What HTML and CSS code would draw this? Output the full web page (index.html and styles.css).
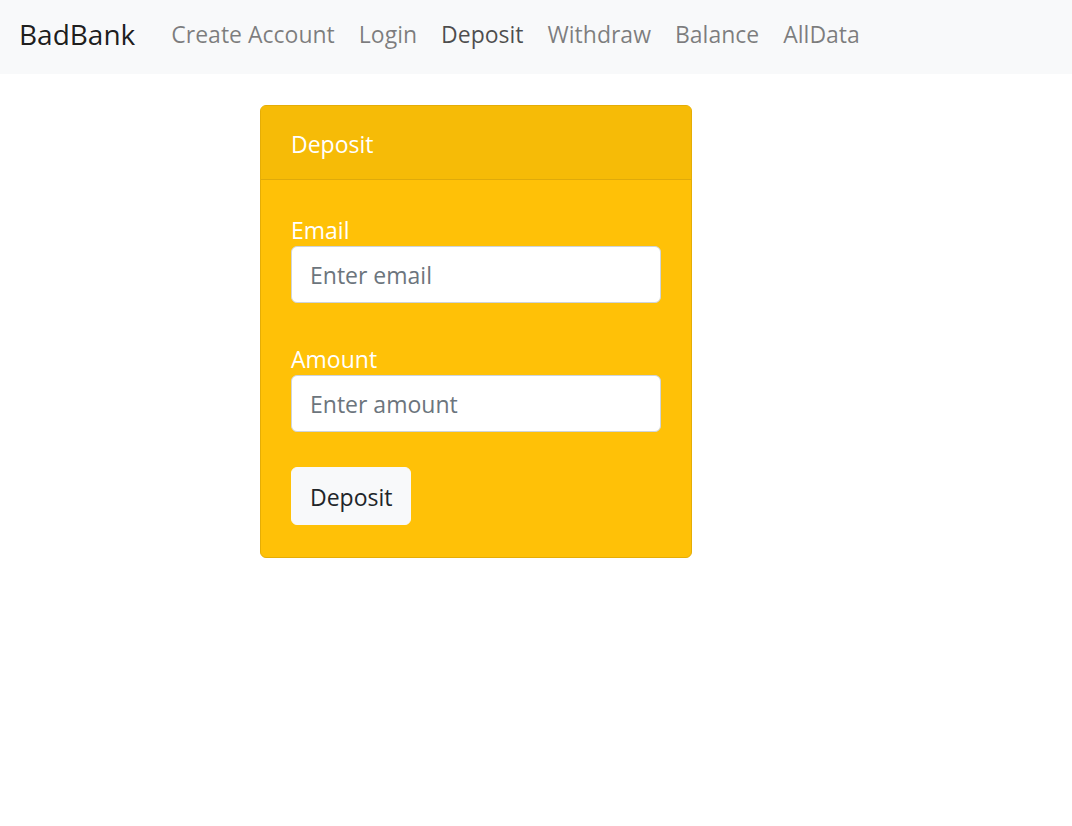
FILE: index.html
```html
<!DOCTYPE html>
<html lang="en">
<head>
<meta charset="utf-8">
<title>BadBank</title>
<link rel="stylesheet" href="styles.css">
</head>
<body>
<nav class="navbar">
  <a class="brand" href="#">BadBank</a>
  <ul class="nav">
    <li><a class="nav-link" href="#">Create Account</a></li>
    <li><a class="nav-link" href="#">Login</a></li>
    <li><a class="nav-link active" href="#">Deposit</a></li>
    <li><a class="nav-link" href="#">Withdraw</a></li>
    <li><a class="nav-link" href="#">Balance</a></li>
    <li><a class="nav-link" href="#">AllData</a></li>
  </ul>
</nav>
<main class="content">
  <div class="card">
    <div class="card-header">Deposit</div>
    <div class="card-body">
      <label class="label" for="email">Email</label>
      <input class="form-control" id="email" type="text" placeholder="Enter email">
      <div class="spacer"></div>
      <label class="label" for="amount">Amount</label>
      <input class="form-control" id="amount" type="text" placeholder="Enter amount">
      <div class="spacer spacer-last"></div>
      <button class="btn" type="button">Deposit</button>
    </div>
  </div>
</main>
</body>
</html>
```
FILE: styles.css
```css
* { box-sizing: border-box; }
html, body { margin: 0; padding: 0; }
body {
  font-family: "Open Sans", "Noto Sans", sans-serif;
  font-size: 23px;
  line-height: 36px;
  color: #212529;
  background: #fff;
}
.navbar {
  display: flex;
  align-items: center;
  height: 74px;
  padding: 0 19px 6px;
  background: #f8f9fa;
}
.brand {
  font-size: 28px;
  color: rgba(0,0,0,.9);
  text-decoration: none;
  margin-right: 24px;
  line-height: 45px;
}
.nav {
  display: flex;
  list-style: none;
  margin: 0;
  padding: 0;
}
.nav-link {
  display: block;
  padding: 0 12px;
  color: rgba(0,0,0,.5);
  text-decoration: none;
}
.nav-link.active { color: rgba(0,0,0,.7); }
.content {
  padding: 31px 0 0 260px;
}
.card {
  width: 432px;
  background: #ffc107;
  border: 1px solid #e5ad06;
  border-radius: 6px;
  color: #fff;
  overflow: hidden;
}
.card-header {
  padding: 20px 30px 17px;
  background: #f6bb07;
  border-bottom: 1px solid #dfaa0a;
}
.card-body {
  padding: 30px 30px 32px;
  display: flex;
  flex-direction: column;
  align-items: flex-start;
}
.label {
  display: block;
  line-height: 32px;
  padding-top: 4px;
}
.form-control {
  display: block;
  width: 100%;
  height: 57px;
  padding: 10px 18px 9px;
  font: inherit;
  color: #495057;
  background: #fff;
  border: 1px solid #ced4da;
  border-radius: 6px;
}
.form-control::placeholder { color: #6c757d; opacity: 1; }
.spacer { height: 36px; }
.spacer-last { height: 35px; }
.btn {
  font: inherit;
  height: 58px;
  padding: 11px 18px 9px;
  color: #212529;
  background: #f8f9fa;
  border: 1px solid #f8f9fa;
  border-radius: 6px;
}
```
